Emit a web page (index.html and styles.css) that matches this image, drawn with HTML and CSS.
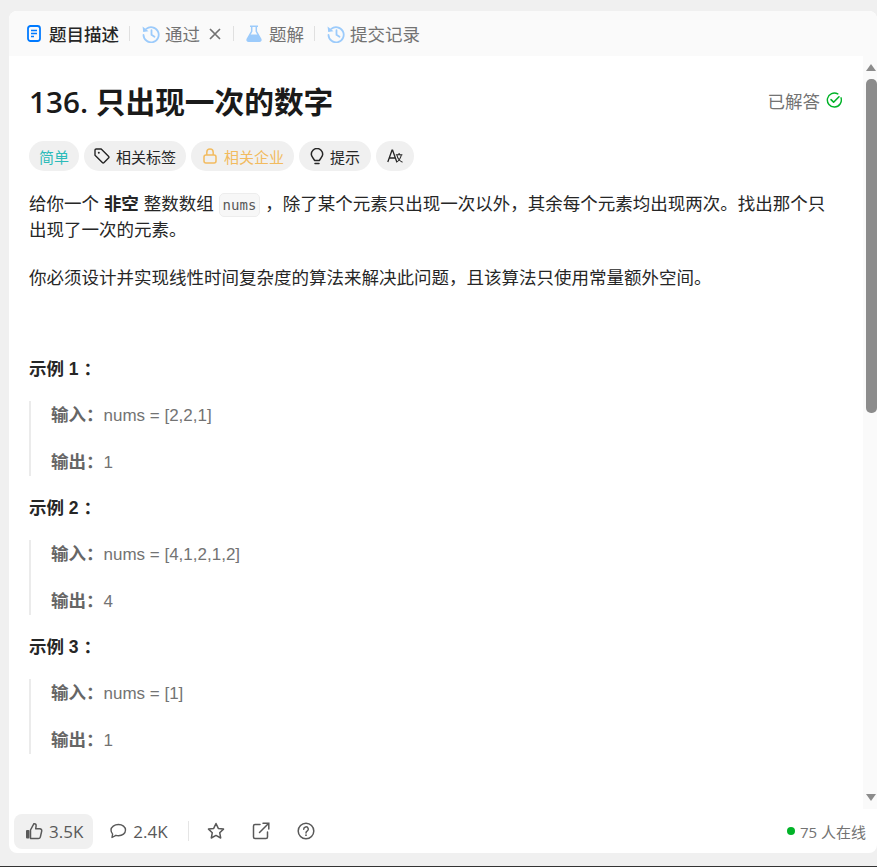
FILE: index.html
```html
<!DOCTYPE html>
<html lang="zh-CN">
<head>
    <meta charset="UTF-8">
    <meta name="viewport" content="width=device-width, initial-scale=1.0">
    <title>136. 只出现一次的数字</title>
    <link rel="stylesheet" href="styles.css">
</head>
<body>

    <div class="panel">
        <div class="tabs">
            <div class="tab active">
                <svg class="tab-icon doc" viewBox="0 0 14 17"><rect x="1" y="1" width="12" height="15" rx="2.500" fill="none" stroke="#007aff" stroke-width="1.800"/><path d="M4 5.500h6M4 8.500h6M4 11.500h3" stroke="#007aff" stroke-width="1.500" fill="none"/></svg>
                题目描述
            </div>
            <span class="sep"></span>
            <div class="tab">
                <svg class="tab-icon clock" viewBox="0 0 18 18"><path d="M4.200 3.900A7.600 7.600 0 1 1 1.500 10" fill="none" stroke="#9ccbfb" stroke-width="1.800" stroke-linecap="round"/><path d="M.6 1.600l.6 5.300 5.300-.7z" fill="#9ccbfb"/><path d="M9.500 5.200v4.600l3 2" fill="none" stroke="#9ccbfb" stroke-width="1.800" stroke-linecap="round"/></svg>
                通过
                <svg class="close-icon" viewBox="0 0 12 12"><path d="M1 1l10 10M11 1L1 11" stroke="#737373" stroke-width="1.700" fill="none"/></svg>
            </div>
            <span class="sep"></span>
            <div class="tab">
                <svg class="tab-icon flask" viewBox="0 0 16 17"><path d="M4 1.200h8M5.700 1.200v5.200L1.300 14q-.8 2 1.500 2.200h10.400q2.300-.2 1.500-2.200l-4.400-7.600V1.200" fill="none" stroke="#9ccbfb" stroke-width="1.500"/><path d="M4 9.500h8l2.700 4.700q.6 2-1.500 2H2.800q-2.100 0-1.500-2z" fill="#9ccbfb"/></svg>
                题解
            </div>
            <span class="sep"></span>
            <div class="tab">
                <svg class="tab-icon clock" viewBox="0 0 18 18"><path d="M4.200 3.900A7.600 7.600 0 1 1 1.500 10" fill="none" stroke="#9ccbfb" stroke-width="1.800" stroke-linecap="round"/><path d="M.6 1.600l.6 5.300 5.300-.7z" fill="#9ccbfb"/><path d="M9.500 5.200v4.600l3 2" fill="none" stroke="#9ccbfb" stroke-width="1.800" stroke-linecap="round"/></svg>
                提交记录
            </div>
        </div>

        <div class="middle">
            <div class="content">
                <div class="title-row">
                    <h1>136. 只出现一次的数字</h1>
                    <div class="solved">
                        已解答
                        <svg viewBox="0 0 16 16" width="16" height="16"><path d="M15 5.800A7 7 0 1 1 11.800 1.900" fill="none" stroke="#01b328" stroke-width="1.400" stroke-linecap="round"/><path d="M5 7.700l2.600 2.500 5.400-5.400" fill="none" stroke="#01b328" stroke-width="1.600" stroke-linecap="round" stroke-linejoin="round"/></svg>
                    </div>
                </div>

                <div class="pills">
                    <span class="pill easy">简单</span>
                    <span class="pill">
                        <svg viewBox="0 0 16 16" width="16" height="16"><path d="M1 2.300Q1 1 2.300 1h4.900l7.300 7.300q.9.900 0 1.800l-4.400 4.400q-.9.900-1.800 0L1 7.200z" fill="none" stroke="#262626" stroke-width="1.400" stroke-linejoin="round"/><circle cx="4.800" cy="4.800" r="1" fill="#262626"/></svg>
                        相关标签
                    </span>
                    <span class="pill locked">
                        <svg viewBox="0 0 14 16" width="14" height="16"><rect x="1" y="7" width="12" height="8" rx="2" fill="none" stroke="#f2bb5f" stroke-width="1.500"/><path d="M3.800 7V4.300a3.200 3.200 0 0 1 6.400 0V7" fill="none" stroke="#f2bb5f" stroke-width="1.500"/></svg>
                        相关企业
                    </span>
                    <span class="pill hint">
                        <svg viewBox="0 0 14 17" width="14" height="17"><path d="M4.500 12.500C4.300 10.500 1.300 9.300 1.300 6.200a5.700 5.700 0 0 1 11.400 0c0 3.100-3 4.300-3.200 6.300z" fill="none" stroke="#262626" stroke-width="1.500" stroke-linejoin="round"/><path d="M5 15.500h4" stroke="#262626" stroke-width="1.500" stroke-linecap="round"/></svg>
                        提示
                    </span>
                    <span class="pill lang">
                        <svg viewBox="0 0 16 14" width="16" height="14"><path d="M.8 13L5 1.200h.6L9.800 13M2.300 9h6" fill="none" stroke="#262626" stroke-width="1.300"/><path d="M8.800 5.800h6.600M12.100 4v1.800M9.900 6c.7 3.500 2.800 6 5.600 7.200M14.300 6c-.7 3.500-2.800 6-5 7.200" fill="none" stroke="#262626" stroke-width="1.100"/></svg>
                    </span>
                </div>

                <p class="desc">给你一个 <strong>非空</strong> 整数数组 <code>nums</code> ，除了某个元素只出现一次以外，其余每个元素均出现两次。找出那个只出现了一次的元素。</p>
                <p class="desc second">你必须设计并实现线性时间复杂度的算法来解决此问题，且该算法只使用常量额外空间。</p>

                <div class="example first">
                    <h4>示例 1 ：</h4>
                    <blockquote>
                        <div class="line"><b>输入：</b>nums = [2,2,1]</div>
                        <div class="line"><b>输出：</b>1</div>
                    </blockquote>
                </div>
                <div class="example">
                    <h4>示例 2 ：</h4>
                    <blockquote>
                        <div class="line"><b>输入：</b>nums = [4,1,2,1,2]</div>
                        <div class="line"><b>输出：</b>4</div>
                    </blockquote>
                </div>
                <div class="example">
                    <h4>示例 3 ：</h4>
                    <blockquote>
                        <div class="line"><b>输入：</b>nums = [1]</div>
                        <div class="line"><b>输出：</b>1</div>
                    </blockquote>
                </div>
            </div>

            <div class="scrollbar">
                <span class="arrow up"></span>
                <span class="thumb"></span>
                <span class="track"></span>
                <span class="arrow down"></span>
            </div>
        </div>

        <div class="footer">
            <span class="action like">
                <svg viewBox="0 0 18 18" width="18" height="18"><rect x="1" y="8" width="3.500" height="8.500" rx="1" fill="#595959"/><path d="M5.500 8l3.300-6.200c1.500-.4 2.500.6 2.300 2.200L10.700 6.800h4.100c1.400 0 2.200 1 1.900 2.300l-1.400 6c-.3 1-1 1.400-2 1.400H5.500z" fill="none" stroke="#595959" stroke-width="1.500" stroke-linejoin="round"/></svg>
                3.5K
            </span>
            <span class="action">
                <svg viewBox="0 0 18 18" width="18" height="18"><path d="M9.500 2.500c4 0 7 2.400 7 5.600s-3 5.600-7 5.600c-.9 0-1.800-.1-2.600-.4L3 15.500l.6-3.400C2.600 11 2 9.600 2 8.100c0-3.200 3.500-5.600 7.500-5.600z" fill="none" stroke="#595959" stroke-width="1.400" stroke-linejoin="round"/></svg>
                2.4K
            </span>
            <span class="footer-sep"></span>
            <svg class="foot-icon" viewBox="0 0 18 18"><path d="M9 1.500l2.300 4.900 5.200.7-3.800 3.600 1 5.300L9 13.400 4.300 16l1-5.300-3.800-3.600 5.200-.7z" fill="none" stroke="#595959" stroke-width="1.500" stroke-linejoin="round"/></svg>
            <svg class="foot-icon" viewBox="0 0 18 18"><path d="M8 2.500H3q-1.500 0-1.500 1.500v11q0 1.500 1.500 1.500h11q1.500 0 1.500-1.500v-5" fill="none" stroke="#595959" stroke-width="1.500" stroke-linecap="round"/><path d="M7.500 10.500L16.500 1.500M11 1.200h5.800V7" fill="none" stroke="#595959" stroke-width="1.500" stroke-linecap="round"/></svg>
            <svg class="foot-icon" viewBox="0 0 18 18"><circle cx="9" cy="9" r="7.800" fill="none" stroke="#595959" stroke-width="1.500"/><path d="M6.700 7.200a2.300 2.300 0 1 1 3.400 2c-.8.500-1.100.9-1.100 1.800" fill="none" stroke="#595959" stroke-width="1.500" stroke-linecap="round"/><circle cx="9" cy="13.200" r=".9" fill="#595959"/></svg>
            <span class="online"><i class="dot"></i>75 人在线</span>
        </div>
    </div>

</body>
</html>
```

FILE: styles.css
```css
* {
    box-sizing: border-box;
}

html, body {
    height: 100%;
}

body {
    margin: 0;
    padding: 11px 0 13px 9px;
    background-color: #f0f0f0;
    border-bottom: 1px solid #333;
    font-family: "Liberation Sans", "Noto Sans CJK SC", sans-serif;
    color: #262626;
    overflow: hidden;
}

.panel {
    height: 842px;
    display: flex;
    flex-direction: column;
    background-color: #fff;
    border-radius: 8px;
    overflow: hidden;
}

.tabs {
    height: 45px;
    flex: none;
    display: flex;
    align-items: center;
    padding-left: 18px;
    background-color: #fafafa;
    font-size: 17.5px;
    color: #737373;
}

.tab {
    display: flex;
    align-items: center;
    gap: 5px;
}

.tab.active {
    color: #262626;
    font-weight: 500;
    gap: 8px;
}

.tab-icon {
    flex: none;
}

.tab-icon.doc {
    width: 14px;
    height: 17px;
}

.tab-icon.clock {
    width: 18px;
    height: 18px;
}

.tab-icon.flask {
    width: 16px;
    height: 17px;
    margin-right: 2px;
}

.close-icon {
    width: 12px;
    height: 12px;
    margin: 0 2px 0 4px;
}

.sep {
    width: 1px;
    height: 15px;
    margin: 0 12px 0 10px;
    background-color: #e0e0e0;
}

.middle {
    flex: 1;
    min-height: 0;
    display: flex;
}

.content {
    flex: 1;
    min-width: 0;
    padding: 26px 21px 0 20px;
    overflow: hidden;
}

.title-row {
    display: flex;
    justify-content: space-between;
    align-items: center;
    height: 36px;
}

h1 {
    margin: 0;
    font-family: "Open Sans", "Noto Sans CJK SC", sans-serif;
    font-size: 29.7px;
    font-weight: 600;
    color: #1a1a1a;
}

.solved {
    display: flex;
    align-items: center;
    gap: 6px;
    font-size: 17.5px;
    color: #737373;
}

.pills {
    display: flex;
    gap: 5px;
    margin-top: 23px;
}

.pill {
    height: 30px;
    display: flex;
    align-items: center;
    gap: 6px;
    padding: 0 10px;
    border-radius: 15px;
    background-color: #f0f0f0;
    font-size: 15px;
    color: #262626;
}

.pill.easy {
    color: #2cbbba;
}

.pill.locked {
    color: #f2bb5f;
    padding-left: 12px;
    gap: 7px;
}

.pill.hint {
    padding: 0 11px;
}

.pill.lang {
    padding: 0 11px;
}

.desc {
    margin: 20px 0 0;
    padding-right: 1px;
    font-size: 17.5px;
    line-height: 26px;
    color: #262626;
}

.desc.second {
    margin-top: 22px;
}

strong {
    font-weight: 700;
}

code {
    display: inline-block;
    height: 24px;
    padding: 0 3px;
    border: 1px solid #ededed;
    border-radius: 5px;
    background-color: #f7f7f7;
    font-family: "DejaVu Sans Mono", monospace;
    font-size: 14px;
    line-height: 22px;
    color: #595959;
}

.example {
    margin-top: 18.5px;
}

.example.first {
    margin-top: 64px;
}

h4 {
    margin: 0;
    font-size: 17.5px;
    line-height: 28px;
    font-weight: 700;
    color: #262626;
}

blockquote {
    margin: 18px 0 0;
    padding-left: 20px;
    border-left: 2px solid #ebebeb;
    display: flex;
    flex-direction: column;
    gap: 18.5px;
    font-size: 17px;
    color: #737373;
}

.line {
    height: 28px;
    line-height: 28px;
}

.line b {
    font-size: 17.5px;
    font-weight: 700;
    color: #666;
}

.scrollbar {
    width: 14px;
    flex: none;
    display: flex;
    flex-direction: column;
    align-items: flex-start;
    padding-left: 3px;
    background-color: #fafafa;
}

.arrow {
    flex: none;
    width: 0;
    height: 0;
    border-left: 5px solid transparent;
    border-right: 5px solid transparent;
}

.arrow.up {
    margin-top: 8px;
    border-bottom: 7px solid #8c8c8c;
}

.arrow.down {
    margin-bottom: 8px;
    border-top: 7px solid #8c8c8c;
}

.thumb {
    flex: none;
    width: 11px;
    height: 334px;
    margin-top: 8px;
    border-radius: 5px;
    background-color: #8c8c8c;
}

.track {
    flex: 1;
}

.footer {
    height: 44px;
    flex: none;
    display: flex;
    align-items: center;
    padding: 0 11px 0 5px;
    font-family: "Open Sans", "Noto Sans CJK SC", sans-serif;
    font-size: 17px;
    color: #595959;
}

.action {
    height: 35px;
    display: flex;
    align-items: center;
    gap: 6px;
    padding: 0 10px 0 11px;
    border-radius: 8px;
}

.action svg {
    flex: none;
}

.action.like {
    background-color: #f0f0f0;
    margin-right: 5px;
}

.footer-sep {
    width: 1px;
    height: 20px;
    margin: 0 18px 0 10px;
    background-color: #e5e5e5;
}

.foot-icon {
    width: 18px;
    height: 18px;
    margin-right: 27px;
}

.online {
    margin-left: auto;
    display: flex;
    align-items: center;
    font-size: 15px;
    color: #737373;
}

.dot {
    width: 8px;
    height: 8px;
    margin-right: 5px;
    border-radius: 50%;
    background-color: #01b328;
}
```
